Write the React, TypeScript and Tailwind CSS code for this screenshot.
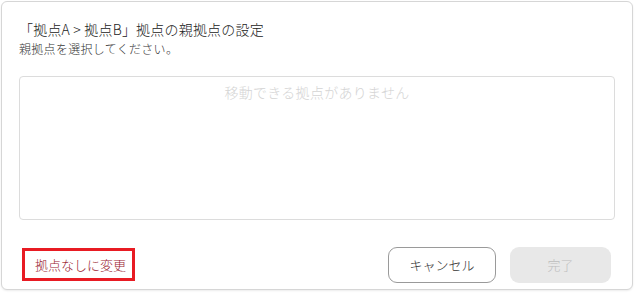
import React from "react";

export default function App() {
  return (
    <div
      className="w-[636px] h-[294px] bg-white overflow-hidden font-light"
      style={{ fontFamily: '"Noto Sans CJK JP", "Noto Sans", sans-serif' }}
    >
      <div className="ml-[1px] mt-[1px] w-[632px] h-[289px] rounded-[6px] border border-[#d6d6d6] bg-white shadow-[0_1px_2px_rgba(0,0,0,0.08)] px-[17px] pt-[17px] flex flex-col">
        <div className="text-[14px] leading-[20px] text-[#222] tracking-[0.2px]">「拠点A &gt; 拠点B」拠点の親拠点の設定</div>
        <div className="mt-[1px] text-[12px] leading-[18px] text-[#333] tracking-[0.3px]">親拠点を選択してください。</div>
        <div className="mt-[18px] h-[144px] rounded-[4px] border border-[#dcdcdc] flex justify-center pt-[5px]">
          <span className="text-[14px] leading-[20px] text-[#d4d4d4] tracking-[0.3px]">移動できる拠点がありません</span>
        </div>
        <div className="mt-[27px] flex items-start justify-between pr-[4px]">
          <div className="ml-[3px] mt-[1px] h-[33px] w-[113px] border-[3px] border-[#e81b23] flex items-center pl-[10px]">
            <span className="text-[13px] leading-[18px] text-[#9a2431]">拠点なしに変更</span>
          </div>
          <div className="flex gap-[14px]">
            <button className="h-[36px] w-[108px] rounded-[9px] border border-[#9a9a9a] bg-white text-[13px] text-[#333]">キャンセル</button>
            <button className="h-[36px] w-[101px] rounded-[9px] bg-[#e8e8e8] text-[13px] text-[#bdbdbd]">完了</button>
          </div>
        </div>
      </div>
    </div>
  );
}
